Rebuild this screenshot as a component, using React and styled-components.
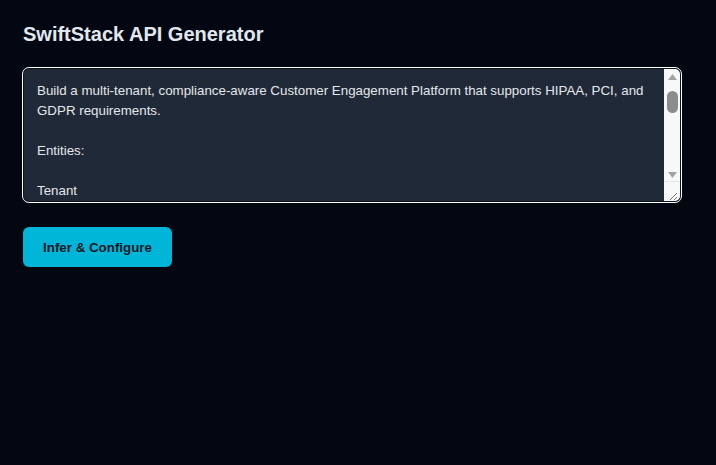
import React from 'react'
import styled, { createGlobalStyle } from 'styled-components'

const GlobalStyle = createGlobalStyle`
  html, body {
    margin: 0;
    background: #030712;
    font-family: "Liberation Sans", Arial, sans-serif;
  }
`

const Page = styled.div`
  min-height: 465px;
  box-sizing: border-box;
  padding: 22px 23px;
  background: #030712;
  color: #e5e7eb;
`

const Title = styled.h1`
  margin: 0 0 22px;
  font-size: 20px;
  font-weight: 700;
  line-height: 24px;
  color: #e0e7ef;
`

const Field = styled.div`
  position: relative;
  width: 658px;
  margin-bottom: 25px;
`

const Prompt = styled.textarea`
  display: block;
  box-sizing: border-box;
  width: 100%;
  height: 134px;
  margin: 0;
  padding: 12px 28px 12px 13px;
  border: 1px solid #0b1220;
  border-radius: 6px;
  outline: 1px solid #ffffff;
  background: #1f2937;
  color: #e5e7eb;
  font-family: "Liberation Sans", Arial, sans-serif;
  font-size: 13.333px;
  line-height: 20px;
  overflow: hidden;
  resize: vertical;
`

/* the native scrollbar does not paint headless, so it is drawn over the field */
const Scrollbar = styled.div`
  position: absolute;
  top: 1px;
  right: 1px;
  bottom: 20px;
  width: 16px;
  display: flex;
  flex-direction: column;
  align-items: center;
  background: #f8f8f8;
  border-top-right-radius: 5px;
  pointer-events: none;
`

const Arrow = styled.div`
  height: 15px;
  display: flex;
  align-items: center;
  justify-content: center;
`

const Track = styled.div`
  flex: 1;
  width: 100%;
  display: flex;
  justify-content: center;
`

const Thumb = styled.div`
  width: 11px;
  height: 22px;
  margin-top: 7px;
  border-radius: 6px;
  background: #8c8c8c;
`

const Corner = styled.div`
  position: absolute;
  right: 1px;
  bottom: 1px;
  width: 16px;
  height: 19px;
  background: #f8f8f8;
  border-top: 1px solid #e4e4e4;
  border-bottom-right-radius: 5px;
  pointer-events: none;
`

const Button = styled.button`
  display: block;
  width: 149px;
  height: 40px;
  padding: 0 16px;
  border: none;
  border-radius: 6px;
  background: #00b6d8;
  color: #111827;
  font-family: "Liberation Sans", Arial, sans-serif;
  font-size: 13.333px;
  font-weight: 700;
  cursor: pointer;
`

const prompt = `Build a multi-tenant, compliance-aware Customer Engagement Platform that supports HIPAA, PCI, and GDPR requirements.

Entities:

Tenant
- id, name, region, compliance_profile

User
- id, tenant_id, email, role, mfa_enabled

Customer
- id, tenant_id, full_name, email, phone, consent_flags

Interaction
- id, customer_id, channel, timestamp, summary

PaymentMethod
- id, customer_id, token, last4, expiry

AuditLog
- id, tenant_id, actor_id, action, resource, timestamp

Requirements:
- Row-level tenant isolation
- Field-level encryption for PII and PHI
- Right-to-be-forgotten workflow
- Immutable audit trail`

const Triangle = ({ down }) => (
  <svg width="9" height="6" viewBox="0 0 9 6">
    <path d={down ? 'M0 0H9L4.5 6Z' : 'M0 6H9L4.5 0Z'} fill="#a3a3a3" />
  </svg>
)

const Grip = () => (
  <svg width="16" height="19" viewBox="0 0 16 19">
    <path d="M13 11L6 18M13 15L10 18" stroke="#7a7a7a" strokeWidth="1" />
  </svg>
)

const App = () => {
  return (
    <Page>
      <GlobalStyle />
      <Title>SwiftStack API Generator</Title>
      <Field>
        <Prompt defaultValue={prompt} />
        <Scrollbar>
          <Arrow><Triangle /></Arrow>
          <Track><Thumb /></Track>
          <Arrow><Triangle down /></Arrow>
        </Scrollbar>
        <Corner><Grip /></Corner>
      </Field>
      <Button>Infer &amp; Configure</Button>
    </Page>
  )
}

export default App
